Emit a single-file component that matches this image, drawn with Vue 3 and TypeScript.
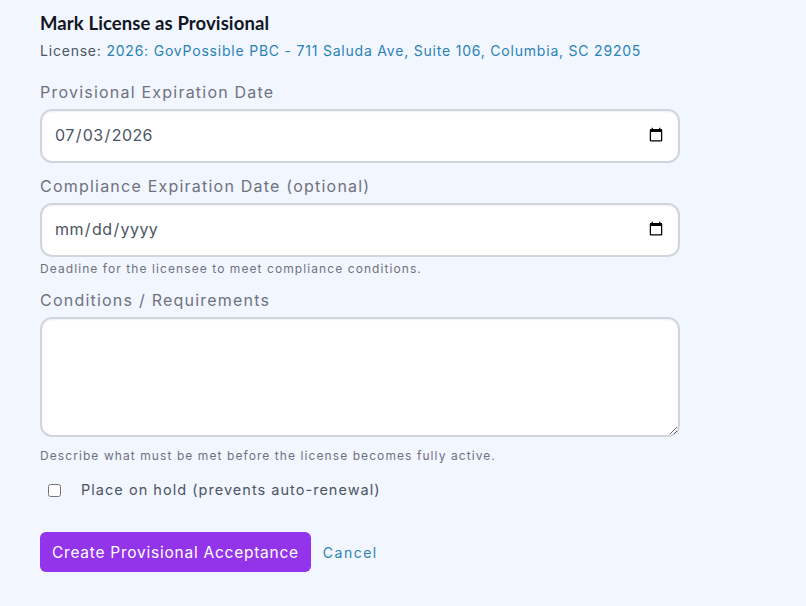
<script setup lang="ts">
import { ref } from 'vue'
const provisional = ref('2026-07-03')
const compliance = ref('')
const conditions = ref('')
const hold = ref(false)
</script>

<template>
  <main class="page">
    <form class="form" @submit.prevent>
      <h2 class="title">Mark License as Provisional</h2>
      <p class="license">License: <a href="#" class="link">2026: GovPossible PBC - 711 Saluda Ave, Suite 106, Columbia, SC 29205</a></p>

      <div class="field first">
        <label class="label" for="prov">Provisional Expiration Date</label>
        <input id="prov" v-model="provisional" class="control date" type="date" />
      </div>

      <div class="field second">
        <label class="label" for="comp">Compliance Expiration Date (optional)</label>
        <input id="comp" v-model="compliance" class="control date" type="date" />
        <small class="help">Deadline for the licensee to meet compliance conditions.</small>
      </div>

      <div class="field">
        <label class="label" for="cond">Conditions / Requirements</label>
        <textarea id="cond" v-model="conditions" class="control area"></textarea>
        <small class="help">Describe what must be met before the license becomes fully active.</small>
      </div>

      <label class="check">
        <input v-model="hold" class="box" type="checkbox" />
        <span>Place on hold (prevents auto-renewal)</span>
      </label>

      <div class="actions">
        <button class="submit" type="submit">Create Provisional Acceptance</button>
        <a href="#" class="link cancel">Cancel</a>
      </div>
    </form>
  </main>
</template>

<style>
html, body { margin: 0; background: #f2f6ff; }
</style>

<style scoped>
.page {
  min-height: 606px;
  box-sizing: border-box;
  padding: 13px 0 0 40px;
  background: #f2f6ff;
  font-family: Inter, "Noto Sans", sans-serif;
}
.form { width: 640px; }
.title {
  margin: 0;
  font-family: Lato, sans-serif;
  font-size: 18.5px;
  line-height: 20px;
  font-weight: 700;
  letter-spacing: 0.1px;
  color: #11161f;
}
.license {
  margin: 8px 0 0;
  font-size: 14px;
  line-height: 20px;
  letter-spacing: 0.79px;
  color: #4b5563;
  white-space: nowrap;
}
.link { color: #2a83b5; text-decoration: none; }
.field { display: flex; flex-direction: column; margin-top: 10px; }
.field.first { margin-top: 19px; }
.field.second { margin-top: 11px; }
.label {
  font-size: 16px;
  line-height: 24px;
  letter-spacing: 1.22px;
  color: #6f7280;
  margin-bottom: 5px;
}
.control {
  box-sizing: border-box;
  width: 640px;
  border: 2px solid #d1d5de;
  border-radius: 12px;
  background: #fff;
  box-shadow: inset 0 1px 2px rgba(0, 0, 0, 0.06);
  font-family: inherit;
  color: #4b5563;
  outline: none;
}
.date {
  height: 54px;
  padding: 0 12px 2px;
  font-size: 16px;
  letter-spacing: 0.4px;
}
.area {
  display: block;
  height: 120px;
  padding: 8px 12px;
  font-size: 16px;
  resize: vertical;
}
.help {
  margin-top: 3px;
  font-size: 12px;
  line-height: 18px;
  letter-spacing: 1.08px;
  color: #6f7280;
}
.area + .help { margin-top: 10px; }
.check {
  display: flex;
  align-items: center;
  margin-top: 13px;
  padding-left: 8px;
  font-size: 14.5px;
  line-height: 24px;
  letter-spacing: 1.03px;
  color: #4b5563;
}
.box { width: 13px; height: 13px; margin: 0 20px 0 0; }
.actions { display: flex; align-items: center; gap: 12px; margin-top: 30px; }
.submit {
  height: 40px;
  padding: 0 12px;
  border: 0;
  border-radius: 6px;
  background: #9333ea;
  color: #fff;
  font-family: inherit;
  font-size: 15.5px;
  letter-spacing: 0.75px;
}
.cancel { font-size: 14px; letter-spacing: 1.5px; }
</style>
